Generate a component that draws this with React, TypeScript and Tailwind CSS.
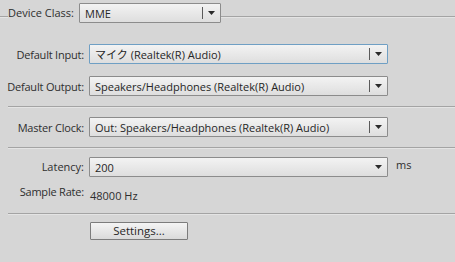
import React from "react";

const Arrow = () => (
  <svg width="7" height="4" viewBox="0 0 7 4" className="block">
    <path d="M0 0H7L3.5 4Z" fill="#2b2b2b" />
  </svg>
);

function Select({
  value,
  width,
  focused = false,
  divider = true,
}: {
  value: string;
  width: string;
  focused?: boolean;
  divider?: boolean;
}) {
  return (
    <div
      className={`flex h-[20px] items-center rounded-[1px] border bg-gradient-to-b from-[#f3f3f3] to-[#dedede] ${width} ${
        focused ? "border-[#6f9fc4]" : "border-[#8c8c8c]"
      }`}
    >
      <span className="flex-1 overflow-hidden whitespace-nowrap pl-[5px] text-[11px] leading-[15px] text-[#262626]">
        {value}
      </span>
      {divider && <span className="h-[12px] w-px bg-[#5a5a5a]" />}
      <span className="flex w-[17px] justify-center">
        <Arrow />
      </span>
    </div>
  );
}

const Sep = () => <div className="ml-[8px] h-[2px] border-t border-[#a4a4a4] border-b border-b-[#e4e4e4]" />;

export default function App() {
  return (
    <div
      className="h-[262px] w-[455px] overflow-hidden bg-[#d6d6d6] text-[11px] text-[#2e2e2e]"
      style={{ fontFamily: '"Open Sans", "Noto Sans CJK JP", sans-serif' }}
    >
      {/* Device class row */}
      <div className="flex items-start pt-[3px]">
        <div className="mt-[13px] h-[2px] w-[8px] border-t border-[#a4a4a4] border-b border-b-[#e4e4e4]" />
        <span className="mt-[2px] w-[71px] leading-[15px]">Device Class:</span>
        <Select value="MME" width="w-[142px]" />
        <div className="mt-[13px] h-[2px] flex-1 border-t border-[#a4a4a4] border-b border-b-[#e4e4e4]" />
      </div>

      <div className="mt-[21px] flex items-center">
        <span className="w-[85px] pr-[1px] text-right leading-[15px] tracking-[-0.2px]">Default Input:</span>
        <div className="ml-[4px]">
          <Select value="マイク (Realtek(R) Audio)" width="w-[299px]" focused />
        </div>
      </div>
      <div className="mt-[12px] flex items-center">
        <span className="w-[85px] pr-[1px] text-right leading-[15px] tracking-[-0.2px]">Default Output:</span>
        <div className="ml-[4px]">
          <Select value="Speakers/Headphones (Realtek(R) Audio)" width="w-[299px]" />
        </div>
      </div>

      <div className="mt-[10px]">
        <Sep />
      </div>

      <div className="mt-[9px] flex items-center">
        <span className="w-[85px] pr-[1px] text-right leading-[15px] tracking-[-0.2px]">Master Clock:</span>
        <div className="ml-[4px]">
          <Select value="Out: Speakers/Headphones (Realtek(R) Audio)" width="w-[299px]" />
        </div>
      </div>

      <div className="mt-[10px]">
        <Sep />
      </div>

      <div className="mt-[8px] flex items-start">
        <span className="mt-[2px] w-[85px] pr-[1px] text-right leading-[15px]">Latency:</span>
        <div className="ml-[4px]">
          <Select value="200" width="w-[299px]" divider={false} />
        </div>
        <span className="ml-[8px] leading-[15px]">ms</span>
      </div>

      <div className="mt-[7px] flex items-start">
        <span className="w-[85px] pr-[1px] text-right leading-[15px] tracking-[-0.2px]">Sample Rate:</span>
        <span className="ml-[5px] mt-[4px] leading-[15px]">48000 Hz</span>
      </div>

      <div className="mt-[10px]">
        <Sep />
      </div>

      <div className="ml-[90px] mt-[7px]">
        <button className="h-[18px] w-[98px] rounded-[1px] border border-[#7c7c7c] bg-gradient-to-b from-[#f4f4f4] to-[#dadada] text-[11.5px] leading-none text-[#262626]">
          Settings...
        </button>
      </div>
    </div>
  );
}
